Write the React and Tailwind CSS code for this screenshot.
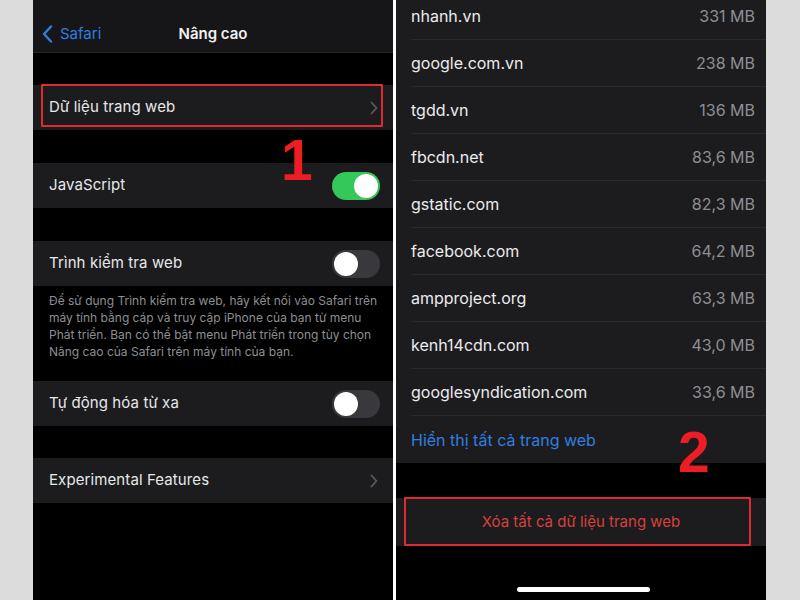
import React from "react";

const font = { fontFamily: "Inter, 'Noto Sans', 'DejaVu Sans', sans-serif" };

function Chevron() {
  return (
    <svg width="8" height="14" viewBox="0 0 8 14" fill="none">
      <path d="M1.5 1.5 L6.5 7 L1.5 12.5" stroke="#5a5a5e" strokeWidth="1.8" strokeLinecap="round" strokeLinejoin="round" />
    </svg>
  );
}

function Toggle({ on }) {
  return (
    <div className={`w-[48px] h-[28px] rounded-full p-[2px] flex items-center ${on ? "bg-[#34c759] justify-end" : "bg-[#39393d] justify-start"}`}>
      <div className="w-[24px] h-[24px] rounded-full bg-white" />
    </div>
  );
}

function Row({ children, right, className = "" }) {
  return (
    <div className={`relative h-[45px] bg-[#1c1c1e] flex items-center justify-between pl-[16px] pr-[13px] ${className}`}>
      <span className="text-[15px] text-[#e8e8ea] tracking-[0.1px]">{children}</span>
      {right}
    </div>
  );
}

const sites = [
  ["nhanh.vn", "331 MB"],
  ["google.com.vn", "238 MB"],
  ["tgdd.vn", "136 MB"],
  ["fbcdn.net", "83,6 MB"],
  ["gstatic.com", "82,3 MB"],
  ["facebook.com", "64,2 MB"],
  ["ampproject.org", "63,3 MB"],
  ["kenh14cdn.com", "43,0 MB"],
  ["googlesyndication.com", "33,6 MB"],
];

export default function App() {
  return (
    <div className="w-[800px] h-[600px] overflow-hidden flex bg-[#dcdcdc]" style={font}>
      <div className="w-[33px] shrink-0" />
      {/* Left phone */}
      <div className="w-[360px] shrink-0 h-full bg-black relative">
        <div className="h-[53px] bg-[#161618] border-b border-[#262628] relative flex items-end justify-center pb-[7px]">
          <div className="absolute left-[9px] bottom-[7px] flex items-center gap-[7px]">
            <svg width="11" height="18" viewBox="0 0 11 18" fill="none">
              <path d="M9 1.5 L2 9 L9 16.5" stroke="#2f7fe0" strokeWidth="2.4" strokeLinecap="round" strokeLinejoin="round" />
            </svg>
            <span className="text-[15px] text-[#2f7fe0]">Safari</span>
          </div>
          <span className="text-[15px] font-semibold text-[#f0f0f0]">Nâng cao</span>
        </div>
        <div className="h-[32px]" />
        <Row right={<div className="mr-[2px]"><Chevron /></div>}>
          Dữ liệu trang web
          <span className="absolute left-[8px] right-[10px] top-[-1px] bottom-[3px] border-2 border-[#df2a30] rounded-[1px]" />
        </Row>
        <div className="h-[33px]" />
        <Row right={<Toggle on />}>JavaScript</Row>
        <div className="h-[33px]" />
        <Row right={<Toggle />}>Trình kiểm tra web</Row>
        <div className="pl-[16px] pr-[6px] pt-[6px] pb-[21px] text-[12px] leading-[17px] text-[#8e8e93] whitespace-nowrap">
          Để sử dụng Trình kiểm tra web, hãy kết nối vào Safari trên<br />
          máy tính bằng cáp và truy cập iPhone của bạn từ menu<br />
          Phát triển. Bạn có thể bật menu Phát triển trong tùy chọn<br />
          Nâng cao của Safari trên máy tính của bạn.
        </div>
        <Row right={<Toggle />}>Tự động hóa từ xa</Row>
        <div className="h-[32px]" />
        <Row right={<div className="mr-[2px]"><Chevron /></div>}>Experimental Features</Row>
        <span
          className="absolute left-[248px] top-[132px] text-[57px] leading-none font-bold text-[#ee1c24]"
          style={{ fontFamily: "'Liberation Sans', Arial, sans-serif" }}
        >
          1
        </span>
      </div>
      <div className="w-[3px] shrink-0 bg-white" />
      {/* Right phone */}
      <div className="w-[370px] shrink-0 h-full bg-black relative">
        <div className="mt-[-7px] bg-[#1c1c1e]">
          {sites.map(([name, size]) => (
            <div key={name} className="h-[47px] pl-[15px] flex">
              <div className="flex-1 flex items-center justify-between pr-[11px] border-b border-[#2a2a2c]">
                <span className="text-[16px] text-[#ececee]">{name}</span>
                <span className="text-[16px] text-[#8e8e93]">{size}</span>
              </div>
            </div>
          ))}
          <div className="h-[47px] pl-[15px] flex items-center">
            <span className="text-[16px] text-[#2f7fe0]">Hiển thị tất cả trang web</span>
          </div>
        </div>
        <div className="h-[35px]" />
        <div className="relative h-[48px] bg-[#1c1c1e] flex items-center justify-center">
          <span className="text-[15px] text-[#d9403c]">Xóa tất cả dữ liệu trang web</span>
          <span className="absolute left-[8px] right-[15px] top-[-1px] bottom-[0px] border-2 border-[#df2a30] rounded-[1px]" />
        </div>
        <div className="absolute left-[121px] top-[587px] w-[133px] h-[5px] rounded-full bg-white" />
        <span
          className="absolute left-[282px] top-[424px] text-[57px] leading-none font-bold text-[#ee1c24]"
          style={{ fontFamily: "'Liberation Sans', Arial, sans-serif" }}
        >
          2
        </span>
      </div>
      <div className="flex-1" />
    </div>
  );
}
